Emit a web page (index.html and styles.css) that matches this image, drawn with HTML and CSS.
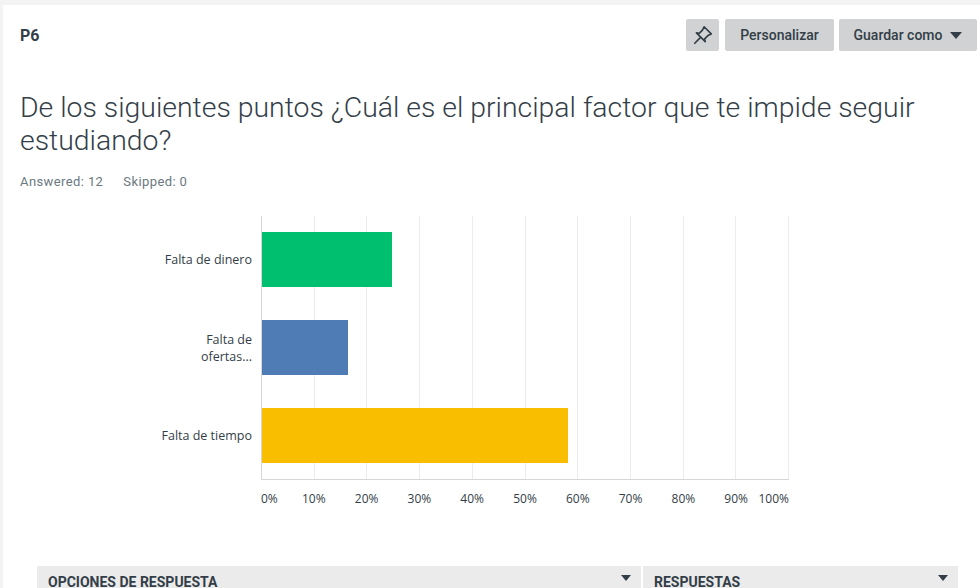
FILE: index.html
```html
<!DOCTYPE html>
<html lang="es">
<head>
<meta charset="utf-8">
<title>P6</title>
<link rel="stylesheet" href="styles.css">
</head>
<body>
<div class="card">
  <div class="header">
    <div class="qnum">P6</div>
    <div class="actions">
      <button class="btn btn-icon" aria-label="Fijar">
        <svg width="22" height="22" viewBox="0 0 20 20" fill="none" stroke="#333e48" stroke-width="1.5" stroke-linejoin="round" stroke-linecap="round">
          <path d="M11 2.5 L17.5 9 L14.5 10.5 L11.5 13.5 L12 16 L4 8 L6.5 8.5 L9.5 5.5 Z"/>
          <path d="M7.8 12.2 L2.5 17.5"/>
        </svg>
      </button>
      <button class="btn btn-custom">Personalizar</button>
      <button class="btn btn-save">Guardar como <span class="caret"></span></button>
    </div>
  </div>

  <h1 class="title">De los siguientes puntos ¿Cuál es el principal factor que te impide seguir estudiando?</h1>
  <div class="stats"><span>Answered: 12</span><span>Skipped: 0</span></div>

  <div class="chart">
    <div class="labels">
      <div class="label">Falta de dinero</div>
      <div class="label">Falta de<br>ofertas...</div>
      <div class="label">Falta de tiempo</div>
    </div>
    <div class="plot-wrap">
      <div class="plot">
        <div class="grid">
          <span></span><span></span><span></span><span></span><span></span>
          <span></span><span></span><span></span><span></span><span></span>
        </div>
        <div class="row"><div class="bar green" style="width:24.7%"></div></div>
        <div class="row"><div class="bar blue" style="width:16.4%"></div></div>
        <div class="row"><div class="bar yellow" style="width:58%"></div></div>
      </div>
      <div class="ticks">
        <span>0%</span><span>10%</span><span>20%</span><span>30%</span><span>40%</span><span>50%</span><span>60%</span><span>70%</span><span>80%</span><span>90%</span><span>100%</span>
      </div>
    </div>
  </div>

  <div class="table">
    <div class="th th-main">OPCIONES DE RESPUESTA <span class="sort"></span></div>
    <div class="th th-resp">RESPUESTAS <span class="sort"></span></div>
  </div>
</div>
</body>
</html>
```

FILE: styles.css
```css
html, body {
  margin: 0;
  padding: 0;
  background: #f3f3f3;
  overflow: hidden;
}
body {
  font-family: "Open Sans", "Liberation Sans", sans-serif;
  color: #333e48;
}
.card {
  background: #fff;
  margin: 5px 0 0 3px;
  padding: 14px 3px 0 17px;
  height: 600px;
  box-sizing: border-box;
}
.header {
  display: flex;
  justify-content: space-between;
  align-items: center;
  height: 32px;
}
.qnum {
  font-family: "Roboto", "Liberation Sans", sans-serif;
  font-weight: 700;
  font-size: 16px;
  color: #333e48;
}
.actions {
  display: flex;
  gap: 5px;
}
.btn {
  height: 32px;
  border: none;
  border-radius: 2px;
  background: #d0d2d3;
  color: #333e48;
  font-family: "Roboto", "Liberation Sans", sans-serif;
  font-weight: 500;
  font-size: 14px;
  padding: 0;
  display: flex;
  align-items: center;
  justify-content: center;
  gap: 6px;
  cursor: pointer;
}
.btn-icon {
  width: 33px;
  margin-right: 1px;
}
.btn-custom {
  width: 109px;
}
.btn-save {
  width: 138px;
}
.caret {
  width: 0;
  height: 0;
  border-left: 6px solid transparent;
  border-right: 6px solid transparent;
  border-top: 7px solid #333e48;
  margin-left: 2px;
}
.title {
  font-family: "Roboto", "Liberation Sans", sans-serif;
  font-weight: 300;
  font-size: 28.4px;
  line-height: 33px;
  color: #333e48;
  margin: 40px 40px 0 0;
  letter-spacing: 0;
}
.stats {
  margin-top: 17px;
  font-family: "Roboto", "Liberation Sans", sans-serif;
  font-size: 13px;
  letter-spacing: 0.4px;
  color: #6b787f;
  display: flex;
  gap: 20px;
}
.chart {
  display: flex;
  margin-top: 27px;
}
.labels {
  width: 232px;
  padding-right: 9px;
  display: flex;
  flex-direction: column;
  height: 263px;
  box-sizing: content-box;
}
.label {
  flex: 1;
  display: flex;
  align-items: center;
  justify-content: flex-end;
  text-align: right;
  font-size: 12.5px;
  line-height: 17px;
  color: #333e48;
}
.plot-wrap {
  width: 528px;
}
.plot {
  position: relative;
  height: 263px;
  border-left: 1px solid #d6d6d6;
  border-bottom: 1px solid #d6d6d6;
  display: flex;
  flex-direction: column;
}
.grid {
  position: absolute;
  inset: 0;
  display: flex;
  pointer-events: none;
}
.grid span {
  flex: 1;
  border-right: 1px solid #ececec;
}
.row {
  flex: 1;
  display: flex;
  align-items: center;
  position: relative;
}
.bar {
  height: 55px;
}
.green { background: #00bf6f; }
.blue { background: #507cb6; }
.yellow { background: #f9be00; }
.ticks {
  display: flex;
  justify-content: space-between;
  margin-top: 10px;
  font-size: 12px;
  color: #333e48;
  position: relative;
  height: 16px;
}
.ticks span {
  width: 0;
  display: flex;
  justify-content: center;
  white-space: nowrap;
}
.ticks span:first-child {
  justify-content: flex-start;
}
.ticks span:last-child {
  justify-content: flex-end;
}
.table {
  display: flex;
  margin: 60px 0 0 17px;
  width: 921px;
  background: #ebebeb;
}
.th {
  height: 30px;
  display: flex;
  align-items: center;
  justify-content: space-between;
  box-sizing: border-box;
  padding: 2px 10px 0 11px;
  font-family: "Roboto", "Liberation Sans", sans-serif;
  font-weight: 700;
  font-size: 14px;
  color: #333e48;
}
.th-main {
  width: 606px;
  border-right: 2px solid #fff;
}
.th-resp {
  flex: 1;
}
.sort {
  width: 0;
  height: 0;
  border-left: 5px solid transparent;
  border-right: 5px solid transparent;
  border-top: 6px solid #333e48;
  margin-top: -8px;
}
```
